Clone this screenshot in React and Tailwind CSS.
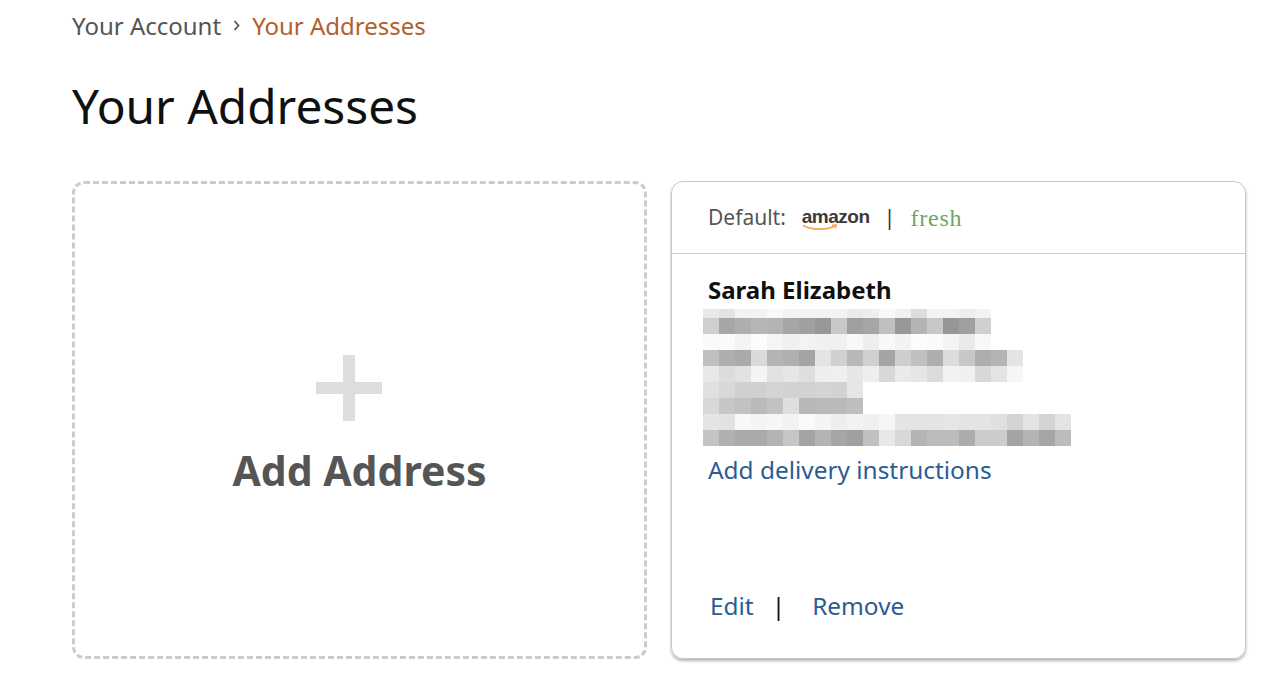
const sans = '"Noto Sans", "Open Sans", sans-serif';

// blurred-out address lines, one entry per 16px block
const blurRows = [
  { h: 9, cells: ['e9','e4','f2','f2','f8','f3','f3','f3','f3','eb','ee','f8','f0','dd','f3','f3','ee','f3'] },
  { h: 16, cells: ['cf','a6','ae','b6','b4','a6','a0','98','c8','a0','a6','c0','98','b4','c8','96','a0','d0'] },
  { h: 16, cells: ['fa','fa','f3','fc','f5','f0','f3','f0','f0','f8','ee','f8','f2','fc','fa','f4','ea','f8'] },
  { h: 16, cells: ['c0','ae','aa','da','b4','b0','a4','e4','d0','b8','d0','a4','ce','c0','ae','dc','c8','ae','b4','e4'] },
  { h: 16, cells: ['e8','dc','e2','f4','e2','e6','de','ee','f0','e6','ee','d8','ea','e6','dc','f2','f0','d8','e4','f6'] },
  { h: 16, cells: ['e0','d8','d0','d0','d4','d2','d2','d4','d2','e6'] },
  { h: 16, cells: ['d8','c6','c2','ba','c2','de','b8','ba','ba','be'] },
  { h: 16, cells: ['e4','e2','f8','f4','f6','f2','fa','f4','ee','f2','f0','f6','e4','e4','e4','e6','e4','e4','e0','d4','e4','d4','e4'] },
  { h: 16, cells: ['c4','b0','aa','aa','b4','c6','a4','b4','a6','a0','c0','e8','d8','b4','bc','bc','ac','cc','cc','a4','b4','a6','bc'] },
];

function BlurredAddress() {
  let y = 0;
  return (
    <svg width="369" height="137" viewBox="0 0 369 137" shapeRendering="crispEdges" className="block -ml-[5px]">
      {blurRows.map((row, i) => {
        const top = y;
        y += row.h;
        return row.cells.map((c, j) => (
          <rect key={i + '-' + j} x={j * 16} y={top} width="16" height={row.h} fill={'#' + c + c + c} />
        ));
      })}
    </svg>
  );
}

function Swoosh() {
  return (
    <svg width="38" height="7" viewBox="0 0 38 7" className="absolute left-[10px] top-[21px]">
      <path d="M1 1.5C10 6 24 6.5 33 2" fill="none" stroke="#f0a84a" strokeWidth="1.6" />
      <path d="M30 1.2l4.5-.2-1 3.5" fill="none" stroke="#f0a84a" strokeWidth="1.2" />
    </svg>
  );
}

export default function App() {
  return (
    <div className="w-[1266px] h-[680px] overflow-hidden bg-white pl-[72px]" style={{ fontFamily: sans }}>
      {/* Breadcrumb */}
      <div className="flex items-center h-[24px] mt-[14px] text-[24px] leading-[24px] text-[#555555]">
        <span>Your Account</span>
        <svg width="7" height="11" viewBox="0 0 7 11" className="mx-[12px] -mt-[2px]">
          <path d="M1.5 1l4 4.5-4 4.5" fill="none" stroke="#555555" strokeWidth="1.8" />
        </svg>
        <span className="text-[#b25f2b]">Your Addresses</span>
      </div>

      <h1 className="mt-[36px] text-[47.8px] leading-[64px] font-normal text-[#0f1111]">Your Addresses</h1>

      <div className="flex gap-[24px] mt-[43px]">
        {/* Add address */}
        <div className="w-[575px] h-[478px] rounded-[12px] border-[3px] border-dashed border-[#cccccc] flex flex-col items-center">
          <svg width="66" height="66" viewBox="0 0 66 66" className="mt-[171px] mr-[22px]">
            <path d="M27 0h12v27h27v12H39v27H27V39H0V27h27z" fill="#dddddd" />
          </svg>
          <span className="mt-[17px] text-[41px] leading-[64px] font-bold text-[#555555]">Add Address</span>
        </div>

        {/* Default address card */}
        <div className="w-[575px] h-[478px] rounded-[12px] border border-[#c8c8c8] shadow-[0_2px_3px_rgba(0,0,0,0.3)] flex flex-col">
          <div className="h-[72px] flex items-center pl-[36px] border-b border-[#cccccc] text-[21px] text-[#555555]">
            <span>Default:</span>
            <span className="relative ml-[6px] w-[68px] pl-[10px] font-bold text-[19px] tracking-[-0.5px] text-[#3a3a3a]" style={{ fontFamily: '"Liberation Sans", sans-serif' }}>
              amazon
              <Swoosh />
            </span>
            <span className="ml-[24px] text-[#333333]">|</span>
            <span className="ml-[15px] text-[24px] tracking-[0.8px] text-[#6aa860]" style={{ fontFamily: '"Liberation Serif", serif' }}>fresh</span>
          </div>
          <div className="flex-1 flex flex-col pl-[36px]">
            <span className="mt-[20px] text-[24px] leading-[32px] font-bold text-[#0f1111]">Sarah Elizabeth</span>
            <div className="mt-[3px]">
              <BlurredAddress />
            </div>
            <span className="mt-[8px] text-[24.4px] leading-[32px] text-[#2b5c94]">Add delivery instructions</span>
            <div className="flex items-center mt-[104px] ml-[2px] text-[24.4px] leading-[32px] text-[#2b5c94]">
              <span>Edit</span>
              <span className="ml-[18px] text-[#0f1111]">|</span>
              <span className="ml-[27px]">Remove</span>
            </div>
          </div>
        </div>
      </div>
    </div>
  );
}
